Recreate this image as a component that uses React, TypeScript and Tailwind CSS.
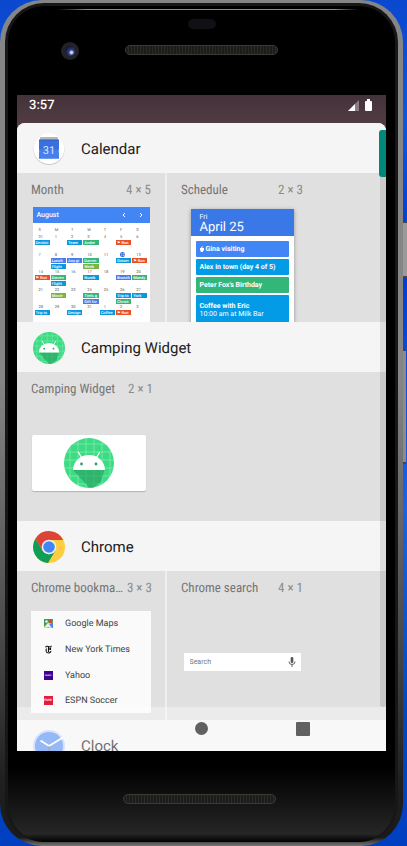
import type { ReactNode } from "react";

const EVENT_COLORS: Record<string, string> = {
  b: "bg-[#0a97dc]",
  g: "bg-[#33b679]",
  r: "bg-[#e8502a]",
  p: "bg-[#4a7cf0]",
  l: "bg-[#7cb342]",
};

type Day = { n: string; ev?: [string, string][]; today?: boolean };

const DAYS: Day[] = [
  { n: "31", ev: [["b", "Dentist"]] }, { n: "1" }, { n: "2", ev: [["b", "Team"]] },
  { n: "3", ev: [["g", "Andre"]] }, { n: "4" }, { n: "5", ev: [["r", "⚑ Run"]] }, { n: "6" },
  { n: "7" }, { n: "8", ev: [["p", "Lunch"], ["b", "Flight"]] }, { n: "9", ev: [["p", "Any gi"]] },
  { n: "10", ev: [["g", "Darren"], ["l", "Week"]] }, { n: "11" },
  { n: "12", today: true, ev: [["b", "Grocer"]] }, { n: "13", ev: [["r", "⚑ Run"]] },
  { n: "14", ev: [["r", "⚑ Run"]] }, { n: "15", ev: [["g", "Darren"], ["b", "Flight"]] }, { n: "16" },
  { n: "17", ev: [["b", "Numb"]] }, { n: "18" }, { n: "19", ev: [["p", "Brunch"]] }, { n: "20", ev: [["g", "Mandy"]] },
  { n: "21" }, { n: "22", ev: [["l", "Movie"]] }, { n: "23" },
  { n: "24", ev: [["g", "Tim's g"], ["p", "Gift for"]] }, { n: "25" },
  { n: "26", ev: [["b", "Trip to"], ["g", "Christi"]] }, { n: "27", ev: [["b", "York"]] },
  { n: "28", ev: [["b", "Trip to"]] }, { n: "29" }, { n: "30", ev: [["b", "Design"]] }, { n: "31" },
  { n: "1", ev: [["b", "Coffee"]] }, { n: "2", ev: [["r", "⚑ Run"]] }, { n: "3" },
];

function CalendarIcon() {
  return (
    <svg viewBox="0 0 32 32" className="size-8 shrink-0" aria-hidden="true">
      <circle cx="16" cy="16.500" r="15.500" fill="#cbcbcb" />
      <circle cx="16" cy="15.700" r="15.300" fill="#fff" />
      <path d="M7 5q0-1 1-1h16q1 0 1 1v5H7z" fill="#b4b8bc" />
      <path d="M6 6.500h20v10H6z" fill="#2f5fbf" />
      <path d="M6 7.500h20v8.500l-.5 1 .5 8q0 .5-.8.5H6.800Q6 25.500 6 25l.5-8-.5-1z" fill="#3b6fe0" />
      <path d="M6.500 16.500h19l.5 8.500q0 .5-.8.500H6.800Q6 25.500 6 25z" fill="#4580ee" />
      <text x="16" y="20.500" textAnchor="middle" fontFamily="Roboto, sans-serif" fontSize="11" fill="#dfe8fb">31</text>
    </svg>
  );
}

function AndroidIcon({ className }: { className: string }) {
  return (
    <svg viewBox="0 0 50 50" className={className} aria-hidden="true">
      <circle cx="25" cy="25" r="25" fill="#3ddc84" />
      <path
        d="M6 9v32M14 3v44M22 0v50M30 1v48M38 4v42M46 11v28M9 6h32M3 14h44M0 22h50M1 30h48M4 38h42M12 46h26"
        stroke="#8cedb6"
        strokeWidth=".7"
      />
      <path d="M9 32l16 17.500 4 .2L37 44l3.500-12z" fill="#1f9d5c" opacity=".6" />
      <path d="M9 32a16 15 0 0 1 32 0z" fill="#fff" />
      <path d="M17.500 19.500l-3-5M32.500 19.500l3-5" stroke="#fff" strokeWidth="1.300" strokeLinecap="round" />
      <circle cx="17.500" cy="26" r="1.400" fill="#2f9e66" />
      <circle cx="32" cy="26" r="1.400" fill="#2f9e66" />
    </svg>
  );
}

function ChromeIcon() {
  return (
    <svg viewBox="0 0 32 32" className="size-8 shrink-0" aria-hidden="true">
      <circle cx="16" cy="16" r="16" fill="#ffcd40" />
      <path d="M2.500 7.500A16 16 0 0 0 15 32l7.500-12.500-6.500 4-6.500-4z" fill="#0f9d58" />
      <path d="M2.500 7.500A16 16 0 0 1 30.300 9H16L9.500 19.500z" fill="#db4437" />
      <circle cx="16" cy="16" r="7.300" fill="#f1f1f1" />
      <circle cx="16" cy="16" r="5.800" fill="#4285f4" />
    </svg>
  );
}

function ClockIcon() {
  return (
    <svg viewBox="0 0 32 32" className="size-8 shrink-0" aria-hidden="true">
      <circle cx="16" cy="16" r="16" fill="#c3d5f7" />
      <circle cx="16" cy="16" r="14" fill="#5c92f2" />
      <path d="M7.500 10.500L16 16l14-8.500" stroke="#fff" strokeWidth="1.800" fill="none" />
      <path d="M16 16v9" stroke="#777" strokeWidth="1" />
    </svg>
  );
}

function AppHeader({ icon, title }: { icon: ReactNode; title: string }) {
  return (
    <div className="flex h-[50px] shrink-0 items-center gap-4 bg-[#f5f5f5] px-4 pt-0.5">
      {icon}
      <h2 className="text-[15px] leading-5 text-[#212121]">{title}</h2>
    </div>
  );
}

function WidgetCell({ name, size, divided, top, children }: {
  name: string; size: string; divided?: boolean; top?: boolean; children: ReactNode;
}) {
  return (
    <div className={divided ? "flex w-[150px] shrink-0 flex-col border-r-2 border-[#efefef]" : "flex w-[150px] shrink-0 flex-col"}>
      <div className="flex items-center justify-between gap-1 px-3.5 pt-[9px] font-['Roboto_Condensed','Liberation_Sans_Narrow',Roboto,sans-serif] text-[13px] leading-[18px] text-[#757575]">
        <span className="whitespace-nowrap">{name}</span>
        <span className="shrink-0 text-[#8a8a8a]">{size}</span>
      </div>
      <div className={top ? "flex min-h-0 flex-1 flex-col items-center overflow-hidden pt-[7px]" : "flex min-h-0 flex-1 flex-col items-center justify-center pt-[5px]"}>
        {children}
      </div>
    </div>
  );
}

function Section({ children }: { children: ReactNode }) {
  return <div className="flex h-[149px] shrink-0 bg-[#e0e0e0]">{children}</div>;
}

function MonthPreview() {
  return (
    <div className="flex w-[117px] shrink-0 flex-col bg-white">
      <div className="flex h-4 items-center bg-[#4285f4] pr-1.5 pl-1 text-[7px] font-medium text-white">
        <span className="flex-1">August</span>
        <svg viewBox="0 0 24 6" className="h-1.5 w-6" fill="none" stroke="#fff" aria-hidden="true">
          <path d="M5 1L3 3l2 2M20 1l2 2-2 2" />
        </svg>
      </div>
      <div className="grid grid-cols-7 gap-x-px px-0.5 pt-1 text-[4px] leading-[5px] text-[#555]">
        {["S", "M", "T", "W", "T", "F", "S"].map((d, i) => (
          <span key={i} className="pl-1">{d}</span>
        ))}
      </div>
      <div className="grid h-[90px] grid-cols-7 grid-rows-5 gap-x-px px-0.5 pt-0.5 text-[4px] leading-[5px]">
        {DAYS.map((d, i) => (
          <div key={i} className="flex min-w-0 flex-col gap-px">
            <span className={d.today ? "ml-1 w-[5px] rounded-full bg-[#3367d6] text-center text-white" : "pl-1 text-[#555]"}>{d.n}</span>
            {d.ev?.map(([c, t], k) => (
              <span key={k} className={`${EVENT_COLORS[c]} h-[5px] pl-px font-medium whitespace-nowrap text-white`}>
                {t}
              </span>
            ))}
          </div>
        ))}
      </div>
    </div>
  );
}

function SchedulePreview() {
  return (
    <div className="mt-0.5 flex w-[103px] shrink-0 flex-col bg-white shadow-[0_1px_4px_rgba(0,0,0,0.35)]">
      <div className="flex h-[27px] flex-col justify-center bg-[#3b78e7] pl-[9px] text-white">
        <span className="text-[7px] leading-[10px]">Fri</span>
        <span className="text-[13px] leading-3">April 25</span>
      </div>
      <div className="flex flex-col gap-0.5 px-[5px] pt-[5px] text-[7px] leading-[8px] font-bold text-white">
        <span className="flex h-4 items-center gap-0.5 rounded-[1px] bg-[#4285f4] pl-1">
          <svg viewBox="0 0 4 6" className="h-1.5 w-1" fill="#fff" aria-hidden="true">
            <path d="M0 2h1l1-2 .6.3L2.300 2H4v2L2.500 6H1L0 4z" />
          </svg>
          Gina visiting
        </span>
        <span className="flex h-4 items-center rounded-[1px] bg-[#039be5] pl-1 whitespace-nowrap">Alex in town (day 4 of 5)</span>
        <span className="flex h-4 items-center rounded-[1px] bg-[#33b679] pl-1">Peter Fox's Birthday</span>
        <span className="flex h-[30px] flex-col justify-center rounded-[1px] bg-[#039be5] pl-1">
          Coffee with Eric
          <span className="font-normal">10:00 am at Milk Bar</span>
        </span>
      </div>
    </div>
  );
}

const BOOKMARKS: { label: string; icon: ReactNode }[] = [
  {
    label: "Google Maps",
    icon: (
      <svg viewBox="0 0 9 9" className="size-[9px]" aria-hidden="true">
        <path d="M0 0h9v9H0z" fill="#35a160" />
        <path d="M0 8l7-7 2 2-6 6H0z" fill="#f5d75b" />
        <path d="M4 6l5 3V4z" fill="#4a84ec" />
        <path d="M1 8l3-4 4 5z" fill="#e8f0f5" />
        <circle cx="6.500" cy="2.500" r="2" fill="#df4438" />
        <circle cx="2.500" cy="2.500" r="1.200" fill="#fff" />
      </svg>
    ),
  },
  {
    label: "New York Times",
    icon: (
      <svg viewBox="0 0 9 9" className="size-[9px]" fill="none" stroke="#111" aria-hidden="true">
        <path d="M2 2.500Q1.500 1 3.500 1.300L6 2Q7.500 2 7 .7" strokeWidth="1.100" />
        <path d="M4.500 2v5M2.500 3.500Q1.500 5 2.500 6.500M4.500 4.500L6.500 3.500V5" strokeWidth="1.100" />
        <path d="M2 6.500Q3 8.200 5 8 6.500 7.600 7 6" strokeWidth="1.100" />
      </svg>
    ),
  },
  { label: "Yahoo", icon: <span className="flex size-[9px] items-center justify-center bg-[#400090] text-[2px] leading-none font-bold text-white">YAHOO</span> },
  { label: "ESPN Soccer", icon: <span className="flex size-[9px] items-center justify-center bg-[#e51c3c] text-[3px] leading-none font-bold text-white italic">ESPN</span> },
];

function BookmarksPreview() {
  return (
    <ul className="flex w-[120px] flex-col bg-[#fafafa]">
      {BOOKMARKS.map((b) => (
        <li key={b.label} className="flex h-[26px] items-center text-[9px] leading-3 text-[#424242] last:h-6">
          <span className="flex w-[34px] items-center justify-center">{b.icon}</span>
          <span>{b.label}</span>
        </li>
      ))}
    </ul>
  );
}

function SearchPreview() {
  return (
    <div className="flex h-[18px] w-[117px] items-center bg-white pr-[5px] pl-1.5">
      <input
        aria-label="Search"
        placeholder="Search"
        className="min-w-0 flex-1 bg-transparent text-[7px] leading-[8px] outline-none placeholder:text-[#757575]"
      />
      <svg viewBox="0 0 8 10" className="h-2.5 w-2" aria-hidden="true">
        <rect x="2.700" y="0" width="2.600" height="6" rx="1.300" fill="#555" />
        <path d="M1 4.500a3 3 0 0 0 6 0M4 7.500V10" fill="none" stroke="#555" strokeWidth=".9" />
      </svg>
    </div>
  );
}

function Speaker() {
  return (
    <div className="h-2.5 w-[153px] rounded-full border border-[#3a3a37] bg-[#1c1c1a] bg-[repeating-linear-gradient(90deg,transparent_0_2px,#2a2a27_2px_3px)]" />
  );
}

export default function App() {
  return (
    <div className="relative h-screen overflow-hidden bg-[linear-gradient(180deg,#0a48cf,#0d57e0_15%,#0038d0_30%,#1c62e6_60%,#0046c4_85%,#0040c0)] pr-1 font-[Roboto,sans-serif] [text-rendering:geometricPrecision]">
      <div className="absolute top-[221px] right-0 h-[57px] w-2 border-y-2 border-[#444] bg-[#9a9a9a]" />
      <div className="absolute top-[349px] right-px h-[115px] w-2 border-y-2 border-[#444] bg-[#8b8b8b]" />

      <div className="relative h-full rounded-[42px] bg-[linear-gradient(180deg,#858585,#858585_45%,#4a4a4a_75%,#202020_92%,#1a1a1a_99%,#777)] px-[5px] pt-[3px] pb-1">
        <div className="flex h-full flex-col rounded-[39px] border-x-3 border-t-3 border-[#171717] bg-black bg-[linear-gradient(180deg,#000_91%,#1c1c1c_97%,#262626_99%,#000)] px-[9px]">
          <div className="relative h-[89px] shrink-0">
            <div className="absolute top-[3px] right-7 left-10 h-px bg-[linear-gradient(90deg,transparent,#83918c_10%,#83918c_92%,transparent)]" />
            <div className="absolute top-[13px] left-[171px] h-2.5 w-7 rounded-full bg-[#101015]" />
            <div className="absolute top-[36px] left-11 flex size-[18px] items-center justify-center rounded-full bg-[#232325]">
              <div className="size-2.5 rounded-full bg-[radial-gradient(circle_at_65%_65%,#c5d0f5_0_12%,#33427e_28%,#11173a_70%)]" />
            </div>
            <div className="absolute top-[39px] left-[108px]">
              <Speaker />
            </div>
          </div>

          <main className="relative flex min-h-0 flex-1 flex-col overflow-hidden bg-[#523c43]">
            <div className="flex h-7 shrink-0 items-center bg-[linear-gradient(180deg,#43323a,#523c43)] pr-[13px] pl-3 text-white">
              <span className="flex-1 pb-1.5 text-[13px] leading-4 font-medium">3:57</span>
              <svg viewBox="0 0 25 12" className="mb-2 h-3 w-[25px]" aria-hidden="true">
                <path d="M0 12L11 1v11z" fill="#8d7c82" />
                <path d="M0 12L7 5v7z" fill="#fff" />
                <path d="M17 3q0-1 1-1h1V0h3v2h1q1 0 1 1v8q0 1-1 1h-5q-1 0-1-1z" fill="#fff" />
              </svg>
            </div>

            <div className="relative flex min-h-0 flex-1 flex-col overflow-hidden rounded-t-lg bg-[#f5f5f5]">
              <AppHeader icon={<CalendarIcon />} title="Calendar" />
              <Section>
                <WidgetCell name="Month" size="4 × 5" divided top>
                  <MonthPreview />
                </WidgetCell>
                <WidgetCell name="Schedule" size="2 × 3" top>
                  <SchedulePreview />
                </WidgetCell>
              </Section>
              <AppHeader icon={<AndroidIcon className="size-8 shrink-0" />} title="Camping Widget" />
              <Section>
                <WidgetCell name="Camping Widget" size="2 × 1">
                  <div className="mr-1.5 flex h-14 w-[114px] items-center justify-center rounded-[2px] bg-white shadow-[0_1px_1px_rgba(0,0,0,0.2)]">
                    <AndroidIcon className="size-[50px]" />
                  </div>
                </WidgetCell>
              </Section>
              <AppHeader icon={<ChromeIcon />} title="Chrome" />
              <Section>
                <WidgetCell name="Chrome bookma…" size="3 × 3" divided>
                  <BookmarksPreview />
                </WidgetCell>
                <WidgetCell name="Chrome search" size="4 × 1">
                  <SearchPreview />
                </WidgetCell>
              </Section>
              <AppHeader icon={<ClockIcon />} title="Clock" />
              <div className="absolute top-[7px] right-0 bottom-11 w-1.5 rounded-b-sm bg-black/10">
                <div className="-ml-px h-[47px] w-[7px] rounded-l-[3px] bg-[#00897b]" />
              </div>
            </div>

            <nav className="absolute inset-x-0 bottom-0 flex h-11 items-start gap-[88px] bg-white/35 pt-[15px] pl-[178px]">
              <button type="button" aria-label="Home" className="size-[13px] rounded-full bg-[#616161]" />
              <button type="button" aria-label="Recent apps" className="size-3.5 rounded-[1px] bg-[#616161]" />
            </nav>
          </main>

          <div className="flex h-[91px] shrink-0 justify-center pt-[43px] pr-1">
            <Speaker />
          </div>
        </div>
      </div>
    </div>
  );
}
